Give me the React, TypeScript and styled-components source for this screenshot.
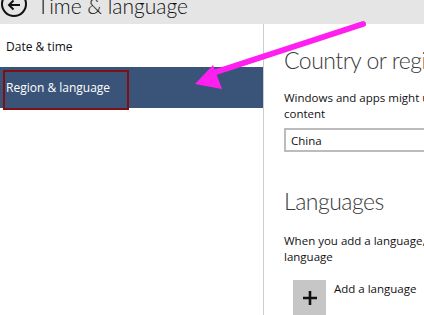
import React from "react";
import styled, { createGlobalStyle } from "styled-components";

const Global = createGlobalStyle`
  html, body { margin: 0; padding: 0; background: #fff; }
  body { width: 424px; height: 315px; overflow: hidden; font-family: "Open Sans", "Noto Sans", sans-serif; }
`;

const Page = styled.div`
  position: relative;
  width: 424px;
  height: 315px;
  overflow: hidden;
  display: flex;
  flex-direction: column;
`;

const Header = styled.div`
  height: 24px;
  flex: none;
  background: #e5e5e5;
  display: flex;
  align-items: flex-end;
  gap: 10px;
  padding-left: 1px;
  overflow: hidden;
`;

const BackCircle = styled.div`
  width: 22px;
  height: 22px;
  border: 2px solid #111;
  border-radius: 50%;
  margin-bottom: 7px;
  flex: none;
  display: flex;
  align-items: flex-end;
  justify-content: center;
`;

const Title = styled.div`
  font-family: "Lato Light", Lato, "Open Sans", sans-serif;
  font-size: 21px;
  font-weight: 300;
  color: #111;
  line-height: 24px;
  margin-bottom: 6px;
  white-space: nowrap;
`;

const Body = styled.div`
  flex: 1;
  display: flex;
`;

const Sidebar = styled.div`
  width: 263px;
  flex: none;
  border-right: 1px solid #cdcdcd;
  padding-top: 2px;
  display: flex;
  flex-direction: column;
`;

const NavItem = styled.div<{ $active?: boolean }>`
  position: relative;
  height: 41px;
  display: flex;
  align-items: center;
  padding-left: 6px;
  font-size: 12px;
  color: ${(p) => (p.$active ? "#fff" : "#111")};
  background: ${(p) => (p.$active ? "#3a5479" : "transparent")};
`;

const Highlight = styled.div`
  position: absolute;
  left: 3px;
  top: 3px;
  width: 122px;
  height: 36px;
  border: 2px solid #7e0f12;
`;

const Content = styled.div`
  flex: 1;
  padding-left: 20px;
  white-space: nowrap;
  display: flex;
  flex-direction: column;
`;

const Heading = styled.div<{ $top: number }>`
  font-family: "Lato Light", Lato, "Open Sans", sans-serif;
  font-size: 23px;
  font-weight: 300;
  letter-spacing: -0.5px;
  color: #3a3a3a;
  line-height: 30px;
  margin-top: ${(p) => p.$top}px;
`;

const Para = styled.div<{ $top: number }>`
  font-size: 11.5px;
  color: #111;
  line-height: 16px;
  margin-top: ${(p) => p.$top}px;
`;

const Select = styled.div`
  margin-top: 6px;
  height: 20px;
  width: 200px;
  border: 2px solid #bcbcbc;
  display: flex;
  align-items: center;
  padding-left: 5px;
  font-size: 11.5px;
  color: #111;
`;

const AddRow = styled.div`
  margin-top: 15px;
  margin-left: 9px;
  display: flex;
  gap: 8px;
`;

const PlusBox = styled.div`
  width: 33px;
  height: 35px;
  background: #c6c6c6;
  display: flex;
  align-items: center;
  justify-content: center;
`;

const AddLabel = styled.div`
  font-size: 11.5px;
  color: #111;
  margin-top: 1px;
`;

const Arrow = styled.svg`
  position: absolute;
  left: 0;
  top: 0;
  pointer-events: none;
`;

export default function App() {
  return (
    <Page>
      <Global />
      <Header>
        <BackCircle>
          <svg width="16" height="16" viewBox="0 0 16 16">
            <path d="M14 6H3M7.5 1.5L3 6l4.5 4.5" stroke="#111" strokeWidth="2" fill="none" />
          </svg>
        </BackCircle>
        <Title>Time &amp; language</Title>
      </Header>
      <Body>
        <Sidebar>
          <NavItem>Date &amp; time</NavItem>
          <NavItem $active>
            Region &amp; language
            <Highlight />
          </NavItem>
        </Sidebar>
        <Content>
          <Heading $top={21}>Country or region</Heading>
          <Para $top={15}>Windows and apps might use your country or region to give you local</Para>
          <Para $top={0}>content</Para>
          <Select>China</Select>
          <Heading $top={34}>Languages</Heading>
          <Para $top={17}>When you add a language, you can read and type in that</Para>
          <Para $top={0}>language</Para>
          <AddRow>
            <PlusBox>
              <svg width="16" height="16" viewBox="0 0 16 16">
                <path d="M8 1v14M1 8h14" stroke="#111" strokeWidth="2.6" />
              </svg>
            </PlusBox>
            <AddLabel>Add a language</AddLabel>
          </AddRow>
        </Content>
      </Body>
      <Arrow width="424" height="315" viewBox="0 0 424 315">
        <path d="M363 24 L216 72" stroke="#ff1ff0" strokeWidth="6" strokeLinecap="round" />
        <polygon points="195,84 213,65 222,89" fill="#ff1ff0" />
      </Arrow>
    </Page>
  );
}
